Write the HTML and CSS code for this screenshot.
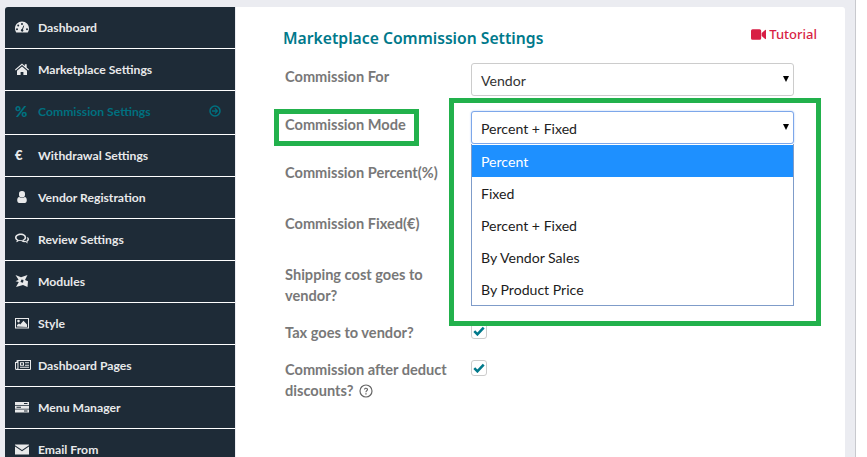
FILE: index.html
```html
<!DOCTYPE html>
<html lang="en">
<head>
  <meta charset="UTF-8">
  <meta name="viewport" content="width=device-width, initial-scale=1.0">
  <title>Marketplace Commission Settings</title>
  <link rel="stylesheet" href="styles.css">
</head>
<body>

  <div class="page">
    <ul class="side-menu">
      <li class="menu-item">
        <svg class="menu-icon" viewBox="0 0 14 14"><path fill-rule="evenodd" d="M7 1.500C3.100 1.500 0 4.600 0 8.500c0 1.400.4 2.700 1.100 3.800.1.100.3.200.5.200h10.800c.2 0 .4-.1.5-.2.7-1.100 1.100-2.400 1.100-3.800 0-3.900-3.100-7-7-7zM7 3a1 1 0 1 1 0 2 1 1 0 0 1 0-2zM3.200 4.600a1 1 0 1 1 0 2 1 1 0 0 1 0-2zM2 8.200a1 1 0 1 1 0 2 1 1 0 0 1 0-2zM12 8.200a1 1 0 1 1 0 2 1 1 0 0 1 0-2zM8.500 5.500l.7.3-1.300 3.600c.4.400.6.800.5 1.300-.2.700-.9 1.100-1.600.9-.7-.2-1.100-.9-.9-1.600.1-.5.600-.9 1.100-1z"/></svg>
        Dashboard
      </li>
      <li class="menu-item">
        <svg class="menu-icon" viewBox="0 0 14 14"><path d="M7 1.500 0 7.600l.7.800L7 3l6.300 5.400.7-.8-2.300-2V2.200h-1.900v1.700zM2 8.800v4.200h3.600V9.900h2.800V13H12V8.800L7 4.500z"/></svg>
        Marketplace Settings
      </li>
      <li class="menu-item menu-item-active">
        <span class="menu-glyph">%</span>
        Commission Settings
        <svg class="menu-arrow" viewBox="0 0 12 12"><circle cx="6" cy="6" r="5" fill="none" stroke="currentColor" stroke-width="1.500"/><path d="M6.300 2.900 9.200 6 6.300 9.100 5.500 8.300 6.900 6.700H3V5.300h3.900L5.500 3.700z"/></svg>
      </li>
      <li class="menu-item">
        <span class="menu-glyph menu-glyph-euro">€</span>
        Withdrawal Settings
      </li>
      <li class="menu-item">
        <svg class="menu-icon" viewBox="0 0 14 14"><path d="M7 1a3 3 0 0 1 3 3.200A3 3 0 0 1 7 7.400a3 3 0 0 1-3-3.200A3 3 0 0 1 7 1zM4.200 7c.8.700 1.700 1.100 2.800 1.100S9 7.700 9.800 7c1.300.1 2 1.300 2 3.300 0 1.500-.8 2.700-2 2.700H4.200c-1.200 0-2-1.200-2-2.700 0-2 .7-3.200 2-3.300z"/></svg>
        Vendor Registration
      </li>
      <li class="menu-item">
        <svg class="menu-icon" viewBox="0 0 14 14"><path fill-rule="evenodd" d="M5.800 1.500C2.600 1.500 0 3.300 0 5.600c0 1.200.8 2.300 2 3-.2.600-.5 1.100-.9 1.600 1.200-.2 2.200-.7 2.900-1.400.6.100 1.200.2 1.800.2 3.200 0 5.400-1.600 5.400-3.600S9 1.500 5.800 1.500zm0 1.600c2.300 0 3.800 1.100 3.800 2.500S8.100 8.200 5.800 8.200c-.7 0-1.400-.1-2.200-.4l-.5.400c0-.2 0-.4-.1-.6C1.900 7 1.600 6.300 1.600 5.600c0-1.400 1.900-2.500 4.200-2.500zM12.200 5c.1.500.1 1 0 1.500.3.300.4.700.2 1.100-.2.500-.6.900-1 1.100 0 .3.100.6.300 1-.6-.2-1-.5-1.400-.9-.9.200-1.700.1-2.500-.2l-1.500.4c1.200 1 2.700 1.300 4.100 1.100.7.700 1.600 1.200 2.700 1.300-.4-.5-.7-1-.9-1.500 1-.6 1.800-1.500 1.800-2.600 0-1.100-.9-2-1.800-2.300z"/></svg>
        Review Settings
      </li>
      <li class="menu-item">
        <svg class="menu-icon" viewBox="0 0 14 14"><path d="M.5 1 6 3.200 12.500 1 10 6l3 1.200-.5 5.800L8 11l-7 2 2.800-5L.5 7.200 3.500 5.800z"/><path d="M6.500 5.500 5.500 8 8 8.700 8.500 6z" fill="#1e2b37"/></svg>
        Modules
      </li>
      <li class="menu-item">
        <svg class="menu-icon" viewBox="0 0 14 14"><path fill-rule="evenodd" d="M0 2h14v10.500H0zM1 3v8.500h12V3zM3.500 3.800a1.300 1.300 0 1 1 0 2.600 1.300 1.300 0 0 1 0-2.600zM2 10.500V9l2-1.500 1.200 1 3.300-3.700 3.500 3.600v2.600z"/></svg>
        Style
      </li>
      <li class="menu-item">
        <svg class="menu-icon menu-icon-wide" viewBox="0 0 16 14"><path fill-rule="evenodd" d="M2.500 2H16v9a1 1 0 0 1-1 1H1.500A1.500 1.500 0 0 1 0 10.500V4h1.500V2.500zM3.500 3v7.500c0 .3-.1.500-.2.500H15V3zM1 5v5.500l.5.500.9-.5V5zM5 4.300h4v3.500H5zM6 5.300v1.500h2V5.300zM10 4.300h4v1h-4zM10 6.800h4v1h-4zM5 8.800h9v1H5z"/></svg>
        Dashboard Pages
      </li>
      <li class="menu-item">
        <svg class="menu-icon" viewBox="0 0 14 14"><path fill-rule="evenodd" d="M0 2h14v3H0zM0 5.700h14v3H0zM0 9.400h14v3H0zM9 3v1h3.500V3zM1.500 6.700v1H6v-1zM9 10.400v1h3.500v-1z"/></svg>
        Menu Manager
      </li>
      <li class="menu-item">
        <svg class="menu-icon" viewBox="0 0 14 14"><path d="M0 2.500h14v.8L7 8 0 3.300zM0 4.500 7 9.200l7-4.700V12.500H0z"/></svg>
        Email From
      </li>
    </ul>

    <div class="content">
      <div class="content-head">
        <h2 class="content-title">Marketplace Commission Settings</h2>
        <a class="tutorial-link">
          <svg class="tutorial-icon" viewBox="0 0 14 10"><path d="M1.500 0h6.500A1.500 1.500 0 0 1 9.500 1.500v7A1.500 1.500 0 0 1 8 10H1.500A1.500 1.500 0 0 1 0 8.500v-7A1.500 1.500 0 0 1 1.500 0zM10 3.700 13.200.8c.3-.3.800 0 .8.400v7.600c0 .4-.5.700-.8.400L10 6.300z"/></svg>
          Tutorial
        </a>
      </div>

      <div class="form-row row-for">
        <label class="form-label">Commission For</label>
        <div class="select-box">Vendor</div>
      </div>
      <div class="form-row row-mode">
        <label class="form-label">Commission Mode</label>
        <div class="select-wrap">
          <div class="select-box select-box-open">Percent + Fixed</div>
          <ul class="select-list">
            <li class="select-option select-option-on">Percent</li>
            <li class="select-option">Fixed</li>
            <li class="select-option">Percent + Fixed</li>
            <li class="select-option">By Vendor Sales</li>
            <li class="select-option">By Product Price</li>
          </ul>
        </div>
      </div>
      <div class="form-row row-percent">
        <label class="form-label">Commission Percent(%)</label>
      </div>
      <div class="form-row row-fixed">
        <label class="form-label">Commission Fixed(€)</label>
      </div>
      <div class="form-row row-shipping">
        <label class="form-label">Shipping cost goes to vendor?</label>
      </div>
      <div class="form-row row-tax">
        <label class="form-label">Tax goes to vendor?</label>
        <span class="check-box">
          <svg class="check-mark" viewBox="0 0 12 10"><path d="M1.300 5.200 4.400 8.300 10.700 1.700" fill="none" stroke="currentColor" stroke-width="2.600"/></svg>
        </span>
      </div>
      <div class="form-row row-discount">
        <label class="form-label">Commission after deduct discounts?
          <svg class="help-icon" viewBox="0 0 14 14"><circle cx="7" cy="7" r="6" fill="none" stroke="currentColor" stroke-width="1.200"/><path d="M4.900 5.500C5 4.300 5.900 3.700 7 3.700c1.200 0 2.100.7 2.100 1.800 0 1.500-1.600 1.400-1.600 2.800H6.400c0-2 1.500-1.900 1.500-2.800 0-.5-.4-.8-.9-.8s-.9.300-1 .8zM6.300 9.200h1.300v1.300H6.300z"/></svg>
        </label>
        <span class="check-box">
          <svg class="check-mark" viewBox="0 0 12 10"><path d="M1.300 5.200 4.400 8.300 10.700 1.700" fill="none" stroke="currentColor" stroke-width="2.600"/></svg>
        </span>
      </div>
    </div>

    <div class="note-box note-box-label"></div>
    <div class="note-box note-box-select"></div>
  </div>

</body>
</html>
```

FILE: styles.css
```css
html, body {
  margin: 0;
  height: 100%;
  background-color: #fff;
  overflow: hidden;
}

body {
  font-family: "Noto Sans", Arial, sans-serif;
}

.page {
  position: relative;
  box-sizing: border-box;
  width: 856px;
  height: 457px;
  padding: 7px 10px 0 5px;
  display: flex;
  align-items: flex-start;
  background-color: #ebecf1;
  border-right: 1px solid #c8c9ce;
  overflow: hidden;
}

/* Side menu */
.side-menu {
  list-style: none;
  margin: 0;
  padding: 0;
  width: 230px;
  flex-shrink: 0;
  border-radius: 3px 0 0 0;
  overflow: hidden;
}

.menu-item {
  box-sizing: border-box;
  height: 42px;
  padding-left: 10px;
  padding-bottom: 1px;
  display: flex;
  align-items: center;
  background-color: #1e2b37;
  border-bottom: 1px solid #fff;
  color: #e8e9ea;
  font-family: "Lato", Arial, sans-serif;
  font-size: 12.2px;
  font-weight: 700;
}

.menu-item-active {
  height: 44px;
  padding-bottom: 3px;
  color: #00707f;
}

.menu-icon {
  width: 14px;
  height: 14px;
  margin-right: 9px;
  fill: currentColor;
  flex-shrink: 0;
}

.menu-icon-wide {
  width: 16px;
  margin-right: 7px;
}

.menu-glyph {
  width: 23px;
  font-size: 15px;
  font-weight: 900;
  flex-shrink: 0;
}

.menu-glyph-euro {
  font-size: 13px;
}

.menu-arrow {
  width: 12px;
  height: 12px;
  margin-left: auto;
  margin-right: 14px;
  fill: currentColor;
}

/* Content card */
.content {
  box-sizing: border-box;
  width: 610px;
  margin-left: 1px;
  height: 450px;
  padding: 20px 28px 0 47px;
  background-color: #fff;
  border-radius: 0 3px 0 0;
}

.content-head {
  display: flex;
  justify-content: space-between;
  align-items: flex-start;
  height: 36px;
}

.content-title {
  margin: 0;
  font-size: 15.7px;
  font-weight: 600;
  line-height: 22px;
  color: #00798b;
}

.tutorial-link {
  display: flex;
  align-items: center;
  gap: 3px;
  margin-top: -1px;
  font-size: 13px;
  font-weight: 500;
  line-height: 16px;
  color: #d81e44;
}

.tutorial-icon {
  width: 15px;
  height: 11px;
  fill: currentColor;
}

/* Form rows */
.form-row {
  display: flex;
  align-items: flex-start;
}

.row-for { height: 48px; }
.row-mode { height: 48px; }
.row-percent { height: 51px; }
.row-fixed { height: 51px; }
.row-shipping { height: 58px; }
.row-tax { height: 37px; }

.form-label {
  box-sizing: border-box;
  width: 188px;
  padding: 3px 20px 0 2px;
  flex-shrink: 0;
  font-family: "Lato", Arial, sans-serif;
  font-size: 14.6px;
  font-weight: 700;
  line-height: 21px;
  color: #787878;
}

.select-wrap {
  position: relative;
  width: 323px;
}

.select-box {
  position: relative;
  box-sizing: border-box;
  width: 323px;
  height: 33px;
  padding-left: 9px;
  border: 1px solid #ccc;
  border-radius: 3px;
  background-color: #fff;
  font-family: "Lato", Arial, sans-serif;
  font-size: 14.1px;
  line-height: 33px;
  color: #333;
}

.select-box::after {
  content: "";
  position: absolute;
  right: 4px;
  top: 12px;
  border-left: 3px solid transparent;
  border-right: 3px solid transparent;
  border-top: 6px solid #000;
}

.select-box-open {
  border-color: #7da7ea;
  box-shadow: 0 0 2px #a9c6f3;
  color: #222;
}

.select-list {
  list-style: none;
  position: absolute;
  z-index: 2;
  left: 0;
  top: 33px;
  box-sizing: border-box;
  width: 323px;
  margin: 0;
  padding: 1px 0 0;
  background-color: #fff;
  border: 1px solid #7f9cc9;
  border-top: 0;
}

.select-option {
  height: 32px;
  padding-left: 9px;
  font-family: "Lato", Arial, sans-serif;
  font-size: 14.1px;
  line-height: 33px;
  color: #1c1c1c;
}

.select-option-on {
  background-color: #1e90ff;
  color: #fff;
}

.check-box {
  box-sizing: border-box;
  width: 16px;
  height: 16px;
  margin-top: 4px;
  display: flex;
  align-items: center;
  justify-content: center;
  border: 1px solid #ccc;
  border-radius: 3px;
  background-color: #fff;
  color: #00798b;
}

.check-mark {
  width: 12px;
  height: 10px;
}

.help-icon {
  width: 14px;
  height: 14px;
  margin-left: 2px;
  vertical-align: -2px;
  fill: currentColor;
  color: #666;
}

/* Green annotation boxes drawn over the screenshot */
.note-box {
  position: absolute;
  z-index: 3;
  box-sizing: border-box;
  border: 5px solid #22b14c;
  pointer-events: none;
}

.note-box-label {
  left: 274px;
  top: 109px;
  width: 145px;
  height: 37px;
}

.note-box-select {
  left: 449px;
  top: 98px;
  width: 372px;
  height: 228px;
}
```
